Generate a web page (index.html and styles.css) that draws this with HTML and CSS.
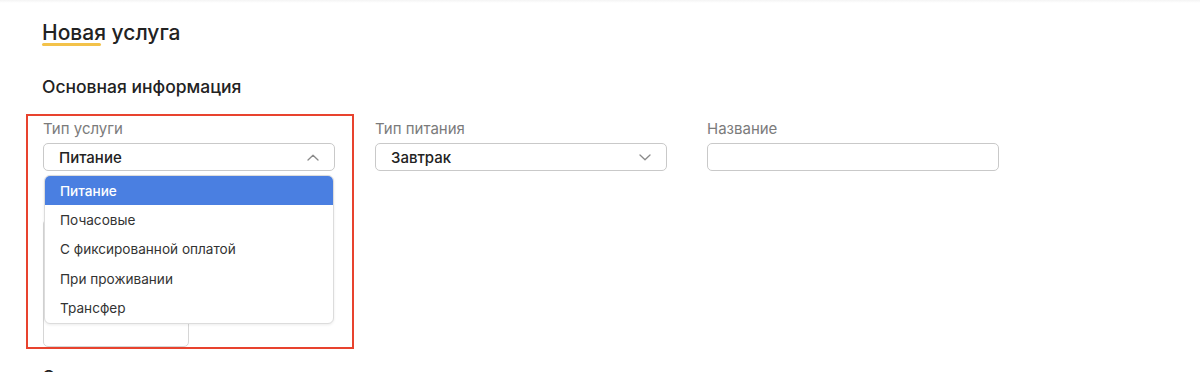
FILE: index.html
```html
<!DOCTYPE html>
<html lang="ru">
<head>
    <meta charset="UTF-8">
    <meta name="viewport" content="width=device-width, initial-scale=1.0">
    <title>Новая услуга</title>
    <link rel="stylesheet" href="styles.css">
</head>
<body>
    <div class="topbar"></div>
    <div class="page">
        <h1 class="title">Новая услуга</h1>
        <h2 class="section">Основная информация</h2>

        <div class="form">
            <div class="row">
                <div class="field">
                    <label class="label">Тип услуги</label>
                    <div class="select open">
                        <span>Питание</span>
                        <svg class="chevron" width="12" height="7" viewBox="0 0 12 7"><path d="M1 6 L6 1.2 L11 6" fill="none" stroke="#8a8a8a" stroke-width="1.3" stroke-linecap="round" stroke-linejoin="round"/></svg>
                        <ul class="menu">
                            <li class="active">Питание</li>
                            <li>Почасовые</li>
                            <li>С фиксированной оплатой</li>
                            <li>При проживании</li>
                            <li>Трансфер</li>
                        </ul>
                    </div>
                </div>
                <div class="field">
                    <label class="label">Тип питания</label>
                    <div class="select">
                        <span>Завтрак</span>
                        <svg class="chevron" width="12" height="7" viewBox="0 0 12 7"><path d="M1 1 L6 5.8 L11 1" fill="none" stroke="#8a8a8a" stroke-width="1.3" stroke-linecap="round" stroke-linejoin="round"/></svg>
                    </div>
                </div>
                <div class="field">
                    <label class="label">Название</label>
                    <div class="input"></div>
                </div>
            </div>

            <div class="row">
                <div class="field small">
                    <div class="textarea"></div>
                </div>
            </div>

            <div class="highlight"></div>
        </div>

        <h2 class="section next">Описание</h2>
    </div>
</body>
</html>
```

FILE: styles.css
```css
body {
    margin: 0;
    font-family: Inter, "Noto Sans", sans-serif;
    color: #222;
    background: #fff;
}

.topbar {
    height: 3px;
    background: linear-gradient(#f4f4f4, #fff);
}

.page {
    padding: 19px 43px 0 42px;
}

.title {
    margin: 0;
    font-size: 21px;
    line-height: 22px;
    font-weight: 500;
}

.title::after {
    content: "";
    display: block;
    width: 59px;
    height: 3px;
    margin-top: -1px;
    border-radius: 2px;
    background: #f3c24a;
}

.section {
    margin: 30px 0 0;
    font-size: 17.5px;
    line-height: 22px;
    font-weight: 500;
}

.section.next {
    margin-top: 19px;
}

.form {
    position: relative;
    margin-top: 21px;
    margin-left: 1px;
}

.row {
    display: flex;
    gap: 40px;
}

.row + .row {
    margin-top: 48px;
}

.field {
    display: flex;
    flex-direction: column;
    gap: 4px;
    width: 292px;
}

.field.small {
    width: 146px;
}

.label {
    font-size: 15px;
    line-height: 20px;
    color: #7b7b7b;
}

.select,
.input {
    position: relative;
    box-sizing: border-box;
    height: 28px;
    border: 1px solid #c9c9c9;
    border-radius: 5px;
    display: flex;
    align-items: center;
    justify-content: space-between;
    padding: 0 15px 0 15px;
    font-size: 15px;
    font-weight: 500;
}

.textarea {
    box-sizing: border-box;
    height: 128px;
    border: 1px solid #d6d6d6;
    border-radius: 5px;
}

.menu {
    position: absolute;
    top: 31px;
    left: 0;
    right: 0;
    margin: 0;
    padding: 0;
    list-style: none;
    background: #fff;
    border: 1px solid #dcdcdc;
    border-radius: 6px;
    box-shadow: 0 1px 3px rgba(0, 0, 0, 0.08);
    overflow: hidden;
    z-index: 2;
}

.menu li {
    height: 29.4px;
    display: flex;
    align-items: center;
    padding-left: 15px;
    font-size: 13.6px;
    font-weight: 400;
    color: #333;
}

.menu li.active {
    background: #4a7fe1;
    color: #fff;
    font-weight: 500;
}

.highlight {
    position: absolute;
    top: -5px;
    left: -17px;
    width: 328px;
    height: 235px;
    box-sizing: border-box;
    border: 2px solid #e8432e;
    pointer-events: none;
    z-index: 3;
}
```
